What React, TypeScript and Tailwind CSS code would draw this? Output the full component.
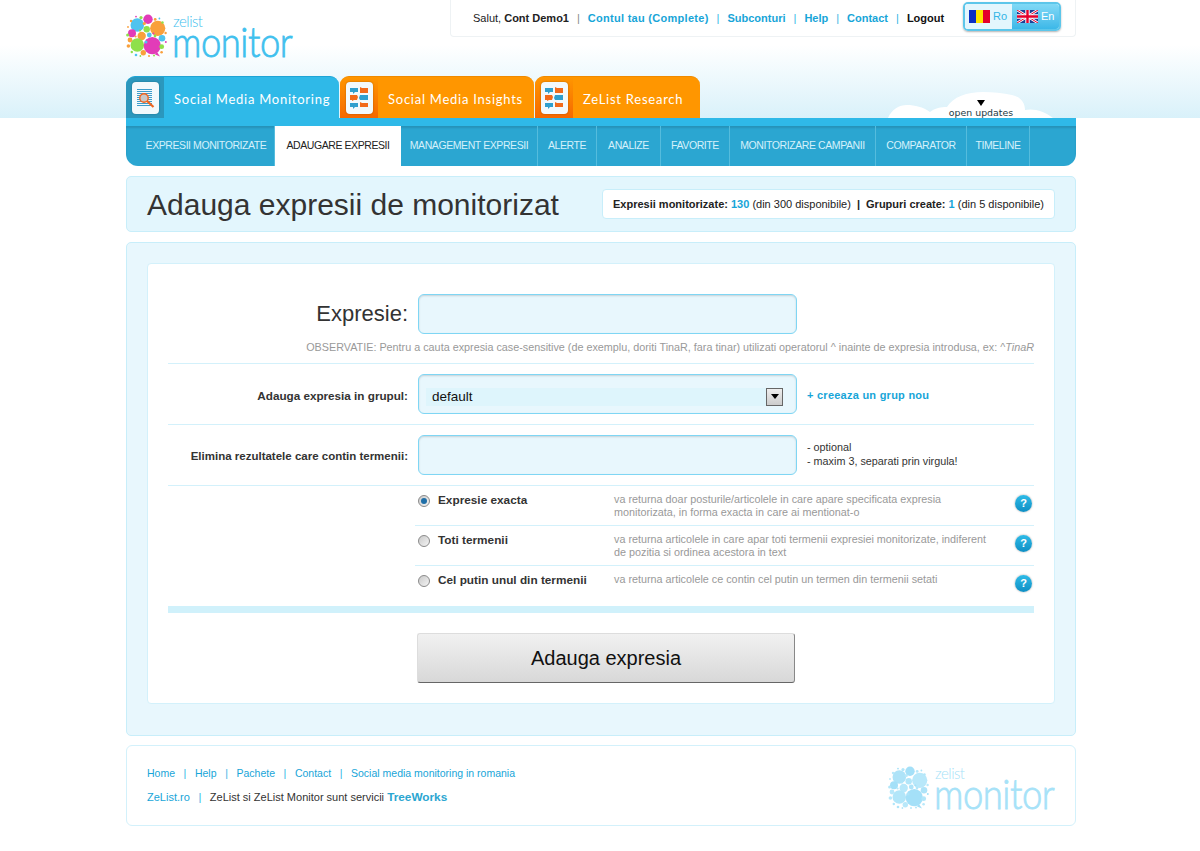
import React from "react"

const bubbles: [number, number, number, number][] = [
  [11.3, 11, 6.8, 0], [22, 5.3, 4.7, 2], [31.7, 14.3, 7.6, 1], [6, 19.3, 4, 2], [20.7, 15.3, 3.2, 3],
  [15.7, 22, 4.2, 1], [23.3, 21, 2.4, 0], [36, 24.3, 3.3, 0], [11.3, 31, 6.8, 3], [26.3, 31.7, 8.6, 2],
  [4, 26, 2.4, 1], [35.7, 32.7, 2.4, 3], [17.3, 38.7, 2.7, 1], [1.6, 21, 1.5, 3], [2.4, 32, 1.8, 1],
  [15, 3.6, 1.6, 3], [29.2, 5.4, 1.4, 1], [29, 22, 1.4, 3], [20, 28, 1.5, 0], [36.5, 8.5, 1.2, 3],
  [5, 7, 1.2, 1], [10, 41, 1.3, 0], [28, 41.5, 1, 3], [39.6, 19, 1.2, 1], [5.8, 38, 1.2, 3], [35.6, 38.2, 1.3, 1],
  [18.3, 9.5, 1.6, 1], [14, 16.5, 1.1, 3], [9.6, 22.5, 1.1, 1], [21.3, 26, 1, 2], [33.4, 4.5, 0.9, 0],
  [39.8, 28, 1, 2], [23, 42, 1, 1], [14.4, 42, 0.9, 3], [2, 13, 0.9, 1], [10, 2.6, 0.9, 2], [27.5, 19.5, 0.9, 2],
]

function Logo({ colors, text }: { colors: string[]; text: string }) {
  return (
    <div className="flex w-[167px] h-[44px] items-start">
      <svg width="42" height="44" viewBox="0 0 42 44" className="shrink-0">
        {bubbles.map(([x, y, r, c], i) => (
          <circle key={i} cx={x} cy={y} r={r} fill={colors[c]} />
        ))}
        <path d="M31 38l3 4.5-5-2z" fill={colors[2]} />
      </svg>
      <div className="ml-[4px] flex flex-col [font-family:Lato,sans-serif]" style={{ color: text }}>
        <span className="ml-[1px] text-[15px] leading-[13px] h-[13px] mt-[1px] font-light tracking-[-0.5px]">zelist</span>
        <span className="block origin-bottom scale-y-[1.15] text-[36.5px] leading-[30px] h-[30px] font-light tracking-[-0.5px] [-webkit-text-stroke:0.7px_currentColor]">monitor</span>
      </div>
    </div>
  )
}

function DocIcon() {
  return (
    <svg width="19" height="20" viewBox="0 0 19 20">
      {[1, 3, 5, 7, 9, 11, 13, 15, 17].map((y) => (
        <rect key={y} x="1" y={y} width="15" height="1" fill="#3d9dcb" />
      ))}
      <circle cx="8" cy="10" r="4.2" fill="#c9c9c9" stroke="#f0641e" strokeWidth="1.4" />
      <path d="M11 13l6.5 6" stroke="#f0641e" strokeWidth="2.2" />
    </svg>
  )
}

function ChatIcon() {
  const blue = "#2f9fce"
  const orange = "#f26a1b"
  return (
    <svg width="18" height="24" viewBox="0 0 18 24">
      <path d="M0 2h8v4H5l-2 2V6H0z" fill={blue} />
      <path d="M10 1l2 1h6v5h-8z" fill={orange} />
      <path d="M0 9h7l1 2-1 3H4l-2 1v-1H0z" fill={orange} />
      <path d="M10 9h8v5h-8l-1-2z" fill={blue} />
      <path d="M0 17h8v4H5l-2 2v-2H0z" fill={blue} />
      <path d="M10 16l2 1h6v4h-8z" fill={orange} />
    </svg>
  )
}

function Tab({ label, active, width, icon }: { label: string; active?: boolean; width: string; icon: React.ReactNode }) {
  return (
    <div className={`${width} h-[42px] flex rounded-t-[9px] overflow-hidden border-t ${active ? "bg-[#2fb9e8] border-[#1ea5d6]" : "bg-[#ff9600] border-[#f08a00]"}`}>
      <div className={`w-[38px] h-full shrink-0 flex items-center justify-center ${active ? "bg-[#2b97bd]" : "bg-gradient-to-b from-[#ff9600] to-[#f56800]"}`}>
        <div className="w-[27px] h-[32px] rounded-[4px] bg-[#f2f9fc] flex items-center justify-center shadow-[0_0_2px_rgba(0,0,0,0.3)]">
          {icon}
        </div>
      </div>
      <span className="ml-[10px] text-white text-[13px] tracking-[0.75px] leading-[44px] whitespace-nowrap [font-family:Lato,sans-serif]">
        {label}
      </span>
    </div>
  )
}

const navItems = [
  { label: "EXPRESII MONITORIZATE", w: "w-[149px]" },
  { label: "ADAUGARE EXPRESII", w: "w-[126px]", active: true },
  { label: "MANAGEMENT EXPRESII", w: "w-[137px]" },
  { label: "ALERTE", w: "w-[59px]" },
  { label: "ANALIZE", w: "w-[64px]" },
  { label: "FAVORITE", w: "w-[69px]" },
  { label: "MONITORIZARE CAMPANII", w: "w-[146px]" },
  { label: "COMPARATOR", w: "w-[91px]" },
  { label: "TIMELINE", w: "w-[63px]" },
]

function Radio({ checked }: { checked?: boolean }) {
  return (
    <span className="block w-[12px] h-[12px] rounded-full border border-[#8a8a8a] bg-gradient-to-br from-[#c9c9c9] to-[#f5f5f5] shrink-0 flex items-center justify-center">
      {checked && <span className="block w-[6px] h-[6px] rounded-full bg-[#1f6fa8]" />}
    </span>
  )
}

function Help() {
  return (
    <span className="block w-[17px] h-[17px] rounded-full bg-gradient-to-b from-[#2dbbe8] to-[#0e8fc4] shadow-[0_0_2px_rgba(0,0,0,0.4)] text-white text-[11px] font-bold leading-[17px] text-center">
      ?
    </span>
  )
}

const options = [
  { title: "Expresie exacta", checked: true, text: "va returna doar posturile/articolele in care apare specificata expresia monitorizata, in forma exacta in care ai mentionat-o" },
  { title: "Toti termenii", text: "va returna articolele in care apar toti termenii expresiei monitorizate, indiferent de pozitia si ordinea acestora in text" },
  { title: "Cel putin unul din termenii", text: "va returna articolele ce contin cel putin un termen din termenii setati" },
]

const inputClass = "w-[379px] bg-[#e8f7fd] border border-[#7fd6f4] rounded-[6px] shadow-[inset_0_1px_2px_rgba(0,0,0,0.15)] outline-none"

const Sep = () => <span className="mx-[8px] text-[#33b5e5]">|</span>
const FootSep = () => <span className="mx-[8.6px] text-[#33b5e5]">|</span>

export default function App() {
  return (
    <div className="min-h-[851px] bg-white text-[#222] [font-family:'Liberation_Sans',Arial,sans-serif]">
      <div className="h-[118px] bg-gradient-to-b from-white from-[38%] to-[#d9f1fa]">
        <div className="w-[950px] ml-[126px] relative h-full">
          <div className="flex justify-between items-start">
            <div className="pt-[14px]">
              <Logo colors={["#4fc3ee", "#f9a03c", "#e23cb8", "#8fe04a"]} text="#3fc0ee" />
            </div>
            <div className="w-[626px] h-[37px] rounded-b-[4px] border border-t-0 border-[#eef2f4] bg-white flex items-center pl-[22px] pr-[14px] text-[11px]">
              <span className="text-[#222] whitespace-nowrap">Salut, <b>Cont Demo1</b></span>
              <span className="mx-[8px] text-[#888]">|</span>
              <a className="font-bold text-[#17a5d8] whitespace-nowrap tracking-[0.28px]">Contul tau (Complete)</a>
              <Sep />
              <a className="font-bold text-[#17a5d8]">Subconturi</a>
              <Sep />
              <a className="font-bold text-[#17a5d8]">Help</a>
              <Sep />
              <a className="font-bold text-[#17a5d8]">Contact</a>
              <Sep />
              <a className="font-bold text-[#111]">Logout</a>
              <div className="ml-auto -mt-[3px] flex w-[98px] h-[29px] rounded-[5px] border-2 border-[#5cc6ea] shadow-[0_1px_2px_rgba(0,0,0,0.3)] overflow-hidden text-[11px]">
                <div className="w-[47px] bg-[#e3f6fd] flex items-center pl-[4px] gap-[3px] text-[#33b5e5]">
                  <svg width="21" height="13" viewBox="0 0 21 13" className="shrink-0">
                    <rect width="7" height="13" fill="#0a2fc4" />
                    <rect x="7" width="7" height="13" fill="#fde400" />
                    <rect x="14" width="7" height="13" fill="#e4002b" />
                  </svg>
                  Ro
                </div>
                <div className="flex-1 bg-gradient-to-b from-[#80d9f6] to-[#3bb8e8] flex items-center pl-[5px] gap-[3px] text-white">
                  <svg width="21" height="13" viewBox="0 0 21 13" className="shrink-0">
                    <rect width="21" height="13" fill="#1f3f94" />
                    <path d="M0 0l21 13M21 0L0 13" stroke="#fff" strokeWidth="2.6" />
                    <path d="M0 0l21 13M21 0L0 13" stroke="#e4002b" strokeWidth="1" />
                    <path d="M10.5 0v13M0 6.5h21" stroke="#fff" strokeWidth="4.4" />
                    <path d="M10.5 0v13M0 6.5h21" stroke="#e4002b" strokeWidth="2.4" />
                  </svg>
                  En
                </div>
              </div>
            </div>
          </div>
          <div className="absolute left-0 bottom-0 flex gap-[1px]">
            <Tab label="Social Media Monitoring" active width="w-[213px]" icon={<DocIcon />} />
            <Tab label="Social Media Insights" width="w-[194px]" icon={<ChatIcon />} />
            <Tab label="ZeList Research" width="w-[165px]" icon={<ChatIcon />} />
          </div>
          <div className="absolute right-[23px] bottom-0 w-[166px] h-[26px]">
            <svg width="166" height="26" viewBox="0 0 166 26" className="absolute inset-0">
              <path d="M1 26C5 17 12 13 20 13C28 13 36 15 43 20C48 16 54 15 60 15C66 5 80 0 96 0C106 0 116 1 125 3C134 5 138 11 138 18C146 16 158 19 166 26Z" fill="#fff" />
            </svg>
            <div className="absolute left-[47px] right-[25px] -bottom-[1px] flex flex-col items-center text-[#1a3a44] [font-family:'DejaVu_Sans',sans-serif] text-[9.4px] leading-[12px]">
              <span className="w-0 h-0 mb-[1px] border-x-[4px] border-x-transparent border-t-[6px] border-t-black" />
              <span className="whitespace-nowrap h-[12px]">open updates</span>
            </div>
          </div>
        </div>
      </div>

      <div className="w-[950px] ml-[126px]">
        <div className="h-[8px] bg-[#2fb9e8]" />
        <div className="h-[40px] bg-[#2ba6d1] rounded-b-[12px] flex shadow-[inset_0_2px_2px_rgba(0,0,0,0.12)] overflow-hidden">
          {navItems.map((item) => (
            <div
              key={item.label}
              className={`${item.w} h-full flex items-center justify-center text-[10.5px] tracking-[-0.42px] whitespace-nowrap ${item.active ? "bg-white text-[#222]" : "text-[#d5f1fb] border-r border-[#55bcdd]"} ${item.label === "EXPRESII MONITORIZATE" ? "pl-[12px]" : ""}`}
            >
              {item.label}
            </div>
          ))}
        </div>

        <div className="mt-[10px] h-[56px] bg-[#e3f6fd] border border-[#c8eefa] rounded-[5px] flex items-center justify-between pl-[20px] pr-[20px]">
          <h1 className="mt-[1px] text-[30px] text-[#333] leading-none">Adauga expresii de monitorizat</h1>
          <div className="w-[453px] h-[30px] bg-white border border-[#c8eefa] rounded-[4px] flex items-center justify-center text-[11px] text-[#222] whitespace-nowrap">
            <b>Expresii monitorizate:&nbsp;</b><b className="text-[#17a5d8]">130</b>&nbsp;(din 300 disponibile)&nbsp;<b className="mx-[3px]">|</b>&nbsp;<b>Grupuri create:&nbsp;</b><b className="text-[#17a5d8]">1</b>&nbsp;(din 5 disponibile)
          </div>
        </div>

        <div className="mt-[10px] h-[494px] bg-[#e8f7fd] border border-[#c8eefa] rounded-[5px] pt-[20px] px-[20px]">
          <div className="h-[441px] bg-white border border-[#d3f1fb] rounded-[4px] px-[20px] pt-[30px]">
            <div className="h-[70px] border-b border-[#d3f1fb]">
              <div className="flex items-center gap-[10px]">
                <label className="w-[240px] text-right text-[22px] text-[#333] -mt-[2px]">Expresie:</label>
                <input className={`${inputClass} h-[40px]`} />
              </div>
              <p className="mt-[7px] text-right text-[10.8px] leading-[12px] text-[#999] whitespace-nowrap">
                OBSERVATIE: Pentru a cauta expresia case-sensitive (de exemplu, doriti TinaR, fara tinar) utilizati operatorul ^ inainte de expresia introdusa, ex: ^<i>TinaR</i>
              </p>
            </div>

            <div className="h-[61px] border-b border-[#d3f1fb] flex items-center gap-[10px]">
              <label className="w-[240px] text-right text-[11.7px] font-bold text-[#333] mt-[3px]">Adauga expresia in grupul:</label>
              <div className={`${inputClass} h-[40px] flex items-center px-[7px]`}>
                <div className="w-[357px] h-[18px] mt-[5px] bg-[#def5fc] flex items-center justify-between pl-[6px] text-[13.5px] text-[#111]">
                  <span className="mt-[2px]">default</span>
                  <span className="w-[17px] h-[18px] border border-[#666] bg-gradient-to-b from-[#eee] to-[#ccc] flex items-center justify-center">
                    <span className="w-0 h-0 border-x-[4px] border-x-transparent border-t-[5px] border-t-black" />
                  </span>
                </div>
              </div>
              <a className="mt-[2px] text-[11px] font-bold text-[#17a5d8] tracking-[0.25px]">+ creeaza un grup nou</a>
            </div>

            <div className="h-[61px] border-b border-[#d3f1fb] flex items-center gap-[10px]">
              <label className="w-[240px] text-right text-[11.5px] font-bold text-[#333] mt-[4px]">Elimina rezultatele care contin termenii:</label>
              <input className={`${inputClass} h-[40px]`} />
              <div className="-mt-[2px] text-[10.8px] leading-[14px] text-[#333]">
                <p>- optional</p>
                <p>- maxim 3, separati prin virgula!</p>
              </div>
            </div>

            <div className="ml-[247px]">
              {options.map((o, i) => (
                <div key={o.title} className={`h-[40px] flex pl-[3px] ${i < 2 ? "border-b border-[#d3f1fb]" : ""}`}>
                  <div className="w-[196px] flex items-start pt-[8px] gap-[8px] text-[11.8px] font-bold text-[#333] whitespace-nowrap">
                    <span className="mt-[1px]"><Radio checked={o.checked} /></span>
                    <span className="leading-[12px]">{o.title}</span>
                  </div>
                  <p className="w-[385px] pt-[7px] text-[10.8px] leading-[13px] text-[#999]">{o.text}</p>
                  <div className="pt-[9px] ml-[16px]"><Help /></div>
                </div>
              ))}
            </div>

            <div className="h-[7px] bg-[#d0f1fb]" />

            <div className="mt-[20px] ml-[249px] w-[378px]">
              <button className="w-full h-[50px] rounded-[3px] border border-[#ddd] border-b-[#666] border-r-[#888] bg-gradient-to-b from-[#f1f1f1] to-[#d8d8d8] text-[20px] text-[#111]">
                Adauga expresia
              </button>
            </div>
          </div>
        </div>

        <div className="mt-[9px] h-[81px] border border-[#d3f1fb] rounded-[6px] flex items-center justify-between pl-[20px] pr-[20px]">
          <div className="flex flex-col gap-[12px] leading-[12px] mb-[2px]">
            <div className="text-[10.5px] text-[#17a5d8] whitespace-nowrap">
              <a>Home</a><FootSep /><a>Help</a><FootSep /><a>Pachete</a><FootSep /><a>Contact</a><FootSep /><a>Social media monitoring in romania</a>
            </div>
            <div className="text-[11px] text-[#333] whitespace-nowrap">
              <a className="text-[#17a5d8]">ZeList.ro</a><FootSep />ZeList si ZeList Monitor sunt servicii <a className="font-bold text-[#2ba6d1] text-[11.8px]">TreeWorks</a>
            </div>
          </div>
          <div className="mt-[5px]">
            <Logo colors={["#aee3f8", "#b8e8fa", "#a4e0f8", "#b2e6f9"]} text="#a6e2f8" />
          </div>
        </div>
      </div>
    </div>
  )
}
